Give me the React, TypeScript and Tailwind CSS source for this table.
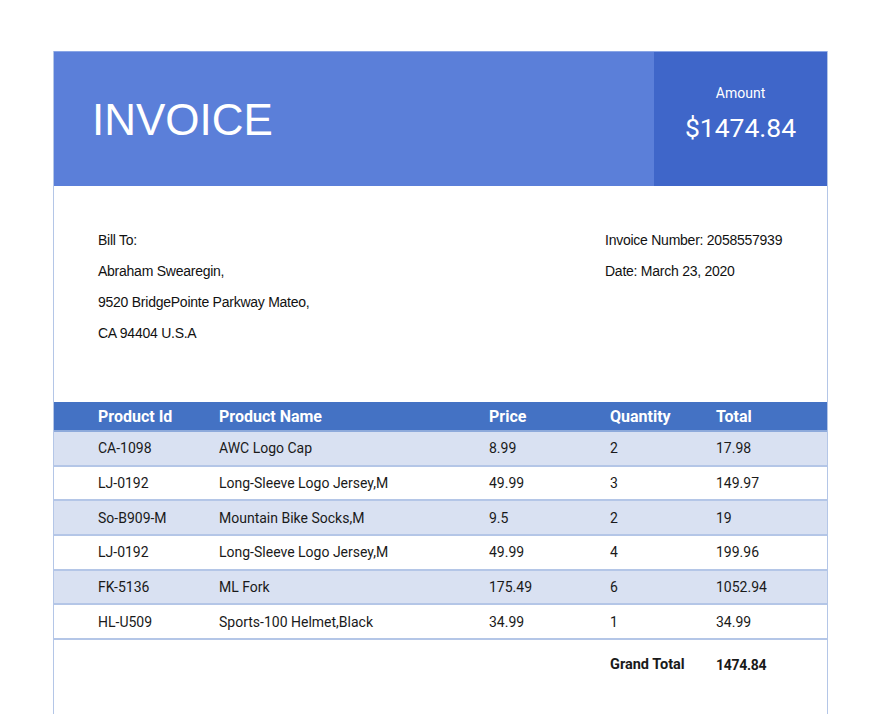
import React from "react";

const rows = [
  ["CA-1098", "AWC Logo Cap", "8.99", "2", "17.98"],
  ["LJ-0192", "Long-Sleeve Logo Jersey,M", "49.99", "3", "149.97"],
  ["So-B909-M", "Mountain Bike Socks,M", "9.5", "2", "19"],
  ["LJ-0192", "Long-Sleeve Logo Jersey,M", "49.99", "4", "199.96"],
  ["FK-5136", "ML Fork", "175.49", "6", "1052.94"],
  ["HL-U509", "Sports-100 Helmet,Black", "34.99", "1", "34.99"],
];

const grid = "grid grid-cols-[165px_270px_121px_106px_1fr] items-center";

export default function App() {
  return (
    <div className="w-[883px] h-[714px] bg-white overflow-hidden pt-[51px]">
      <div className="ml-[53px] w-[775px] h-[663px] border-x border-[#b4c6e7] flex flex-col">
        <div className="flex h-[135px] border-t border-[#8aa6e6]">
          <div className="flex-1 bg-[#5b7fd9] flex items-center pl-[38px]">
            <span className="text-white text-[44px] leading-none font-['Liberation_Sans',Arial,sans-serif] mt-[2px]">
              INVOICE
            </span>
          </div>
          <div className="w-[173px] bg-[#3f66c9] flex flex-col items-center pt-[34px] text-white font-['Roboto',sans-serif]">
            <span className="text-[14px] leading-none">Amount</span>
            <span className="text-[26.5px] leading-none mt-[15px]">$1474.84</span>
          </div>
        </div>

        <div className="flex pt-[39px] pb-[53px] pl-[44px] text-[14px] tracking-[-0.25px] text-[#111] font-['Liberation_Sans',Arial,sans-serif]">
          <div className="flex-1 flex flex-col">
            <div className="h-[31px] flex items-center">Bill To:</div>
            <div className="h-[31px] flex items-center">Abraham Swearegin,</div>
            <div className="h-[31px] flex items-center">9520 BridgePointe Parkway Mateo,</div>
            <div className="h-[31px] flex items-center">CA 94404 U.S.A</div>
          </div>
          <div className="w-[222px] flex flex-col">
            <div className="h-[31px] flex items-center">Invoice Number: 2058557939</div>
            <div className="h-[31px] flex items-center">Date: March 23, 2020</div>
          </div>
        </div>

        <div className="font-['Roboto',sans-serif] text-[14px] text-[#1a1a1a]">
          <div className={`${grid} h-[30px] bg-[#4472c4] text-white font-bold text-[16px] border-b-2 border-[#8eaadb]`}>
            <div className="pl-[44px] pt-[1px]">Product Id</div>
            <div className="pt-[1px]">Product Name</div>
            <div className="pt-[1px]">Price</div>
            <div className="pt-[1px]">Quantity</div>
            <div className="pt-[1px]">Total</div>
          </div>
          {rows.map((r, i) => (
            <div
              key={i}
              className={`${grid} h-[34.7px] border-b-2 border-[#b4c6e7] ${i % 2 === 0 ? "bg-[#d9e1f2]" : "bg-white"}`}
            >
              <div className="pl-[44px] pt-[1px]">{r[0]}</div>
              <div className="pt-[1px]">{r[1]}</div>
              <div className="pt-[1px]">{r[2]}</div>
              <div className="pt-[1px]">{r[3]}</div>
              <div className="pt-[1px]">{r[4]}</div>
            </div>
          ))}
          <div className={`${grid} h-[46px] font-bold pt-[4px]`}>
            <div></div>
            <div></div>
            <div></div>
            <div className="text-[14.5px] leading-[20px]">Grand Total</div>
            <div className="text-[14px] tracking-[-0.3px] leading-[20px]">1474.84</div>
          </div>
        </div>
      </div>
    </div>
  );
}
